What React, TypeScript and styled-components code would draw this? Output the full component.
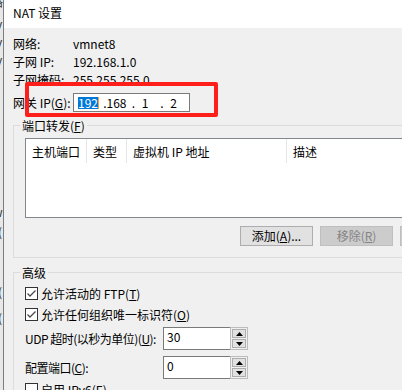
import * as React from 'react'
import styled, { createGlobalStyle } from 'styled-components'

const GlobalStyle = createGlobalStyle`
  html, body {
    margin: 0;
    padding: 0;
    background: #f0f0f0;
  }
  body {
    font-family: "Noto Sans CJK SC", "Noto Sans", sans-serif;
    font-size: 12px;
    color: #000;
  }
  * {
    box-sizing: border-box;
  }
`

const Screen = styled.div`
  width: 402px;
  height: 390px;
  overflow: hidden;
  display: flex;
  background: #f0f0f0;
`

// sliver of the window that sits behind the dialog
const BackWindow = styled.div`
  flex: 0 0 4px;
  border-right: 1px solid #7d7d7d;
  background: #e8e8e8;
  overflow: hidden;
  display: flex;
  flex-direction: column;
`

const Fragment = styled.span<{ $top: number; $shift: number }>`
  display: block;
  margin: ${p => p.$top}px 0 0 ${p => p.$shift}px;
  height: 14px;
  line-height: 14px;
  color: #333;
  white-space: nowrap;
`

const Dialog = styled.div`
  flex: 0 0 492px;
  display: flex;
  flex-direction: column;
`

const TitleBar = styled.div`
  flex: 0 0 28px;
  padding: 4px 0 0 9px;
  background: #fff;
  line-height: 17px;
`

const Body = styled.div`
  flex: 1;
  padding: 7px 11px 0 9px;
`

const InfoGrid = styled.div`
  display: grid;
  grid-template-columns: 60px auto;
  grid-auto-rows: 18px;
  align-items: center;
  line-height: 18px;
`

const Key = styled.u`
  text-underline-offset: 1px;
`

const GatewayRow = styled.div`
  position: relative;
  display: flex;
  align-items: center;
  height: 19px;
  margin-top: 4px;
`

const GatewayLabel = styled.span`
  width: 60px;
`

const IpBox = styled.div`
  width: 117px;
  height: 19px;
  border: 1px solid #7a7a7a;
  background: #fff;
  display: flex;
  align-items: center;
  padding-left: 4px;
  line-height: 12px;
`

const Octet = styled.span`
  width: 20px;
  text-align: center;
`

const Dot = styled.span`
  width: 8.5px;
  text-align: right;
`

const Selected = styled.span`
  display: inline-block;
  background: #0078d7;
  color: #fff;
  border-right: 1px solid #f0a040;
`

// annotation drawn over the screenshot
const RedMark = styled.div`
  position: absolute;
  left: 12px;
  top: -11px;
  width: 193px;
  height: 35px;
  border: 4px solid #ff1f1a;
  border-radius: 2px;
  pointer-events: none;
`

const Group = styled.fieldset<{ $gap: number }>`
  margin: ${p => p.$gap}px 0 0;
  padding: 0;
  border: 1px solid #dcdcdc;
  min-width: 0;
`

const GroupTitle = styled.legend`
  margin-left: 6px;
  padding: 2px 2px 0;
  line-height: 16px;
`

const GroupContent = styled.div`
  padding: 4px 11px 11px;
`

const ListView = styled.div`
  height: 80px;
  border: 1px solid #828790;
  background: #fff;
`

const ListHeader = styled.div`
  display: flex;
  height: 24px;
`

const HeaderCell = styled.div<{ $w?: number }>`
  flex: ${p => (p.$w ? `0 0 ${p.$w}px` : '1')};
  padding: 2px 0 0 6px;
  line-height: 22px;
  border-right: ${p => (p.$w ? '1px solid #e5e5e5' : 'none')};
  white-space: nowrap;
`

const ButtonRow = styled.div`
  display: flex;
  justify-content: flex-end;
  gap: 7px;
  margin-top: 8px;
`

const Button = styled.button<{ $disabled?: boolean }>`
  width: 73px;
  height: 20px;
  padding: 0;
  font: inherit;
  line-height: 18px;
  border: 1px solid ${p => (p.$disabled ? '#bfbfbf' : '#adadad')};
  background: ${p => (p.$disabled ? '#cccccc' : '#e1e1e1')};
  color: ${p => (p.$disabled ? '#838383' : '#000')};
`

const AdvancedContent = styled.div`
  padding: 2px 11px 0;
`

const CheckRow = styled.div`
  display: flex;
  align-items: center;
  gap: 3px;
  height: 21px;
`

const Box = styled.span`
  width: 13px;
  height: 13px;
  border: 1px solid #333;
  background: #fff;
  display: flex;
  align-items: center;
  justify-content: center;
`

const SpinRow = styled.div<{ $gap: number }>`
  display: grid;
  grid-template-columns: 138px 67px 18px;
  grid-template-rows: 23px;
  align-items: center;
  height: 23px;
  margin-top: ${p => p.$gap}px;
`

const SpinLabel = styled.span`
  white-space: nowrap;
  letter-spacing: -0.5px;
`

const NumberField = styled.div`
  height: 23px;
  border: 1px solid #7a7a7a;
  border-right: none;
  background: #fff;
  padding: 1px 0 0 3px;
  line-height: 16px;
`

const Spinner = styled.div`
  height: 23px;
  border: 1px solid #bcbcbc;
  padding: 1px;
  display: flex;
  flex-direction: column;
  gap: 1px;
  background: #f0f0f0;
`

const SpinButton = styled.div`
  height: 9px;
  border: 1px solid #adadad;
  background: #e1e1e1;
  display: flex;
  align-items: center;
  justify-content: center;
`

const Arrow = ({ down }: { down?: boolean }) => (
  <svg width="7" height="4" viewBox="0 0 7 4">
    <polygon points={down ? '0,0 7,0 3.5,4' : '3.5,0 7,4 0,4'} fill="#000" />
  </svg>
)

const Check = ({ checked }: { checked?: boolean }) => (
  <Box>
    {checked && (
      <svg width="11" height="11" viewBox="0 0 11 11">
        <path d="M1.5 5.5 L4 8 L9.5 2.5" fill="none" stroke="#4a4a4a" strokeWidth="1.3" />
      </svg>
    )}
  </Box>
)

const SpinField = ({ label, value, gap }: { label: React.ReactNode; value: string; gap: number }) => (
  <SpinRow $gap={gap}>
    <SpinLabel>{label}</SpinLabel>
    <NumberField>{value}</NumberField>
    <Spinner>
      <SpinButton><Arrow /></SpinButton>
      <SpinButton><Arrow down /></SpinButton>
    </Spinner>
  </SpinRow>
)

const App = () => {
  return (
    <Screen>
      <GlobalStyle />
      <BackWindow>
        <Fragment $top={-5} $shift={-9}>络</Fragment>
        <Fragment $top={8} $shift={-4}>v</Fragment>
        <Fragment $top={4} $shift={-4}>v</Fragment>
        <Fragment $top={4} $shift={-4}>v</Fragment>
        <Fragment $top={138} $shift={-7}>w</Fragment>
        <Fragment $top={6} $shift={-2}>(</Fragment>
        <Fragment $top={46} $shift={-2}>(</Fragment>
        <Fragment $top={12} $shift={-2}>(</Fragment>
      </BackWindow>
      <Dialog>
        <TitleBar>NAT 设置</TitleBar>
        <Body>
          <InfoGrid>
            <span>网络:</span>
            <span>vmnet8</span>
            <span>子网 IP:</span>
            <span>192.168.1.0</span>
            <span>子网掩码:</span>
            <span>255.255.255.0</span>
          </InfoGrid>
          <GatewayRow>
            <GatewayLabel>网关 IP(<Key>G</Key>):</GatewayLabel>
            <IpBox>
              <Octet><Selected>192</Selected></Octet>
              <Dot>.</Dot>
              <Octet>168</Octet>
              <Dot>.</Dot>
              <Octet>1</Octet>
              <Dot>.</Dot>
              <Octet>2</Octet>
            </IpBox>
            <RedMark />
          </GatewayRow>

          <Group $gap={4}>
            <GroupTitle>端口转发(<Key>F</Key>)</GroupTitle>
            <GroupContent>
              <ListView>
                <ListHeader>
                  <HeaderCell $w={61}>主机端口</HeaderCell>
                  <HeaderCell $w={40}>类型</HeaderCell>
                  <HeaderCell $w={160}>虚拟机 IP 地址</HeaderCell>
                  <HeaderCell>描述</HeaderCell>
                </ListHeader>
              </ListView>
              <ButtonRow>
                <Button>添加(<Key>A</Key>)...</Button>
                <Button $disabled>移除(<Key>R</Key>)</Button>
                <Button $disabled>属性(<Key>P</Key>)</Button>
              </ButtonRow>
            </GroupContent>
          </Group>

          <Group $gap={5}>
            <GroupTitle>高级</GroupTitle>
            <AdvancedContent>
              <CheckRow>
                <Check checked />
                <span>允许活动的 FTP(<Key>T</Key>)</span>
              </CheckRow>
              <CheckRow>
                <Check checked />
                <span>允许任何组织唯一标识符(<Key>O</Key>)</span>
              </CheckRow>
              <SpinField gap={2} value="30" label={<>UDP 超时(以秒为单位)(<Key>U</Key>):</>} />
              <SpinField gap={6} value="0" label={<>配置端口(<Key>C</Key>):</>} />
              <CheckRow>
                <Check />
                <span>启用 IPv6(<Key>E</Key>)</span>
              </CheckRow>
            </AdvancedContent>
          </Group>
        </Body>
      </Dialog>
    </Screen>
  )
}

export default App
